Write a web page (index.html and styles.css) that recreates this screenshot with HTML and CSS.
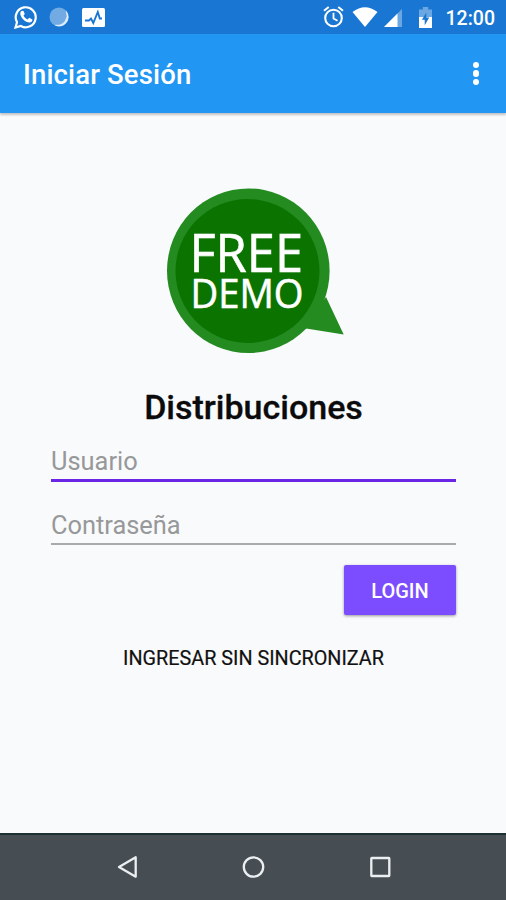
FILE: index.html
```html
<!DOCTYPE html>
<html lang="es">
<head>
  <meta charset="UTF-8" />
  <meta name="viewport" content="width=device-width, initial-scale=1.0"/>
  <title>Iniciar Sesión</title>
  <link rel="stylesheet" href="styles.css">
</head>
<body>
  <div class="status-bar">
    <div class="status-left">
      <svg class="icon-chat" width="24" height="24" viewBox="0 0 24 24">
        <path d="M1.5 22.500 3 17.200A10 10 0 1 1 6.800 21Z" fill="none" stroke="#fff" stroke-width="2.200"/>
        <path d="M8.300 5.700c-1.200 0-2.200 1.500-2 3.200.5 4.200 5.200 8.500 9.100 8.600 1.900 0 3.100-1.300 3-3l-3.200-1.700-1.600 1.700c-2-.8-3.300-2.100-4.100-3.900l1.300-1.500-1.300-3.200z" fill="#fff"/>
      </svg>
      <svg class="icon-sync" width="20" height="20" viewBox="0 0 20 20">
        <circle cx="10" cy="10" r="9.500" fill="#72aae3"/>
        <path d="M17.300 4.500A9 9 0 0 1 6.500 18.200 10 10 0 0 0 17.300 4.500Z" fill="#e9f3fc" stroke="#e9f3fc" stroke-width="0.700"/>
      </svg>
      <svg class="icon-monitor" width="23" height="19" viewBox="0 0 23 19">
        <rect width="23" height="19" rx="1.500" fill="#fff"/>
        <path d="M3 12.500h4l2-2 2.300 4.500L15.800 4l2 6.500H20" fill="none" stroke="#1976d2" stroke-width="1.900"/>
      </svg>
    </div>
    <div class="status-right">
      <svg class="icon-alarm" width="21" height="22" viewBox="0 0 21 22">
        <g fill="none" stroke="#fff">
          <circle cx="10.500" cy="12" r="8.300" stroke-width="2.100"/>
          <path d="M10.500 6.800v5.700l4 2.300" stroke-width="1.800"/>
          <path d="M1 4.800 5.700 1M20 4.800 15.300 1" stroke-width="2"/>
        </g>
      </svg>
      <svg class="icon-wifi" width="26" height="20" viewBox="0 0 26 20">
        <path d="M.5 5Q13-4.500 25.500 5L13 20Z" fill="#fff"/>
      </svg>
      <svg class="icon-signal" width="18" height="18" viewBox="0 0 18 18">
        <path d="M0 18 18 0V18Z" fill="#6ba7e2"/>
        <path d="M0 18 13.500 4.500V18Z" fill="#fff"/>
      </svg>
      <svg class="icon-battery" width="13" height="21" viewBox="0 0 13 21">
        <path d="M0 2.500h3.800V0h5.400v2.500H13V10H0Z" fill="#6ba7e2"/>
        <path d="M0 10h13v11H0Z" fill="#fff"/>
        <path d="M7.300 5.500v5h2.900l-4.500 7.800v-5.500H2.900Z" fill="#1976d2"/>
      </svg>
      <span class="clock">12:00</span>
    </div>
  </div>

  <header class="app-bar">
    <h1>Iniciar Sesión</h1>
    <button class="menu-btn" aria-label="Menú"><i></i><i></i><i></i></button>
  </header>

  <main class="login">
    <svg class="logo" width="178" height="166" viewBox="166 188 178 166">
      <path d="M326 297 343.700 334.500 303 328Z" fill="#238b20"/>
      <ellipse cx="248.300" cy="270.700" rx="81.300" ry="82.300" fill="#238b20"/>
      <circle cx="247.500" cy="271" r="72" fill="#0b7400"/>
      <text class="logo-text" x="189.500" y="272" font-size="53.500" textLength="113.500" lengthAdjust="spacingAndGlyphs">FREE</text>
      <text class="logo-text" x="190.500" y="307.500" font-size="40" textLength="113" lengthAdjust="spacingAndGlyphs">DEMO</text>
    </svg>
    <h2>Distribuciones</h2>
    <form class="login-form">
      <input class="field active" type="text" placeholder="Usuario">
      <input class="field" type="password" placeholder="Contraseña">
      <button class="login-btn" type="button">LOGIN</button>
    </form>
    <button class="skip-btn" type="button">INGRESAR SIN SINCRONIZAR</button>
  </main>

  <nav class="nav-bar">
    <svg width="24" height="24" viewBox="0 0 24 24"><path d="M20.700 2.300v19.400L4 12Z"/></svg>
    <svg width="24" height="24" viewBox="0 0 24 24"><circle cx="12.500" cy="12" r="9.700"/></svg>
    <svg width="24" height="24" viewBox="0 0 24 24"><rect x="3.300" y="3" width="18" height="18" rx="0.500"/></svg>
  </nav>
</body>
</html>
```

FILE: styles.css
```css
:root {
  --primary: #2196f3;
  --primary-dark: #1976d2;
  --accent: #7c4dff;
  --bg-color: #f9fafc;
  --nav-bg: #464e53;
}
* { box-sizing: border-box; margin: 0; padding: 0; }
body {
  height: 100vh;
  display: flex;
  flex-direction: column;
  overflow: hidden;
  background: var(--bg-color);
  font-family: Roboto, "Liberation Sans", sans-serif;
}
svg { display: block; flex: none; }
button { border: none; background: none; font-family: inherit; cursor: pointer; }
.status-bar {
  height: 34px;
  flex: none;
  display: flex;
  justify-content: space-between;
  padding: 0 11px 0 14px;
  background: var(--primary-dark);
}
.status-left,
.status-right { display: flex; align-items: flex-start; }
.icon-chat { margin-top: 5px; }
.icon-sync { margin: 7px 0 0 11px; }
.icon-monitor { margin: 8px 0 0 13px; }
.icon-alarm { margin: 6px 8px 0 0; }
.icon-wifi { margin: 7px 6px 0 0; }
.icon-signal { margin: 8.5px 17px 0 0; }
.icon-battery { margin: 7px 14px 0 0; }
.clock {
  color: #fff;
  font-size: 19.5px;
  font-weight: 500;
  line-height: 37px;
}
.app-bar {
  height: 79px;
  flex: none;
  display: flex;
  align-items: center;
  justify-content: space-between;
  padding: 0 27px 0 23px;
  background: var(--primary);
  box-shadow: 0 2px 2px rgba(0,0,0,0.22);
}
.app-bar h1 {
  color: #fff;
  font-size: 27.5px;
  font-weight: 500;
  line-height: 32px;
  letter-spacing: 0.15px;
  margin-top: 3px;
}
.menu-btn {
  display: flex;
  flex-direction: column;
  gap: 2px;
}
.menu-btn i {
  width: 6.5px;
  height: 6.5px;
  border-radius: 50%;
  background: #fff;
}
.login {
  flex: 1;
  display: flex;
  flex-direction: column;
  align-items: center;
  padding: 75px 50px 0 51px;
}
.logo { margin-left: 3px; }
.logo-text {
  fill: #fff;
  stroke: #fff;
  stroke-width: 0.6;
  font-family: "Open Sans", "Noto Sans", sans-serif;
}
.login h2 {
  margin-top: 33px;
  color: #0b0b0b;
  font-size: 34px;
  font-weight: 500;
  line-height: 40px;
  -webkit-text-stroke: 0.3px #0b0b0b;
}
.login-form {
  width: 100%;
  display: flex;
  flex-direction: column;
}
.field {
  width: 100%;
  height: 41px;
  margin-top: 22px;
  padding-top: 2px;
  border: none;
  border-bottom: 2px solid #a9aaab;
  background: none;
  color: #222;
  font-family: inherit;
  font-size: 25.4px;
  outline: none;
}
.field.active {
  margin-top: 14px;
  border-bottom: 3px solid #6a26e4;
}
.field::placeholder { color: #979899; opacity: 1; }
.login-btn {
  align-self: flex-end;
  width: 112px;
  height: 50px;
  margin-top: 20px;
  border-radius: 2px;
  background: var(--accent);
  box-shadow: 0 1px 3px rgba(0,0,0,0.4);
  color: #fff;
  font-size: 20px;
  font-weight: 500;
  line-height: 52px;
}
.skip-btn {
  margin-top: 32px;
  color: #111;
  font-size: 19.8px;
  line-height: 24px;
  -webkit-text-stroke: 0.2px #111;
}
.nav-bar {
  height: 67px;
  flex: none;
  display: flex;
  justify-content: center;
  align-items: center;
  gap: 102.5px;
  padding-bottom: 2px;
  border-top: 2px solid #1d3032;
  background: var(--nav-bg);
}
.nav-bar svg { fill: none; stroke: #eceff1; stroke-width: 2.3; stroke-linejoin: round; }
```
